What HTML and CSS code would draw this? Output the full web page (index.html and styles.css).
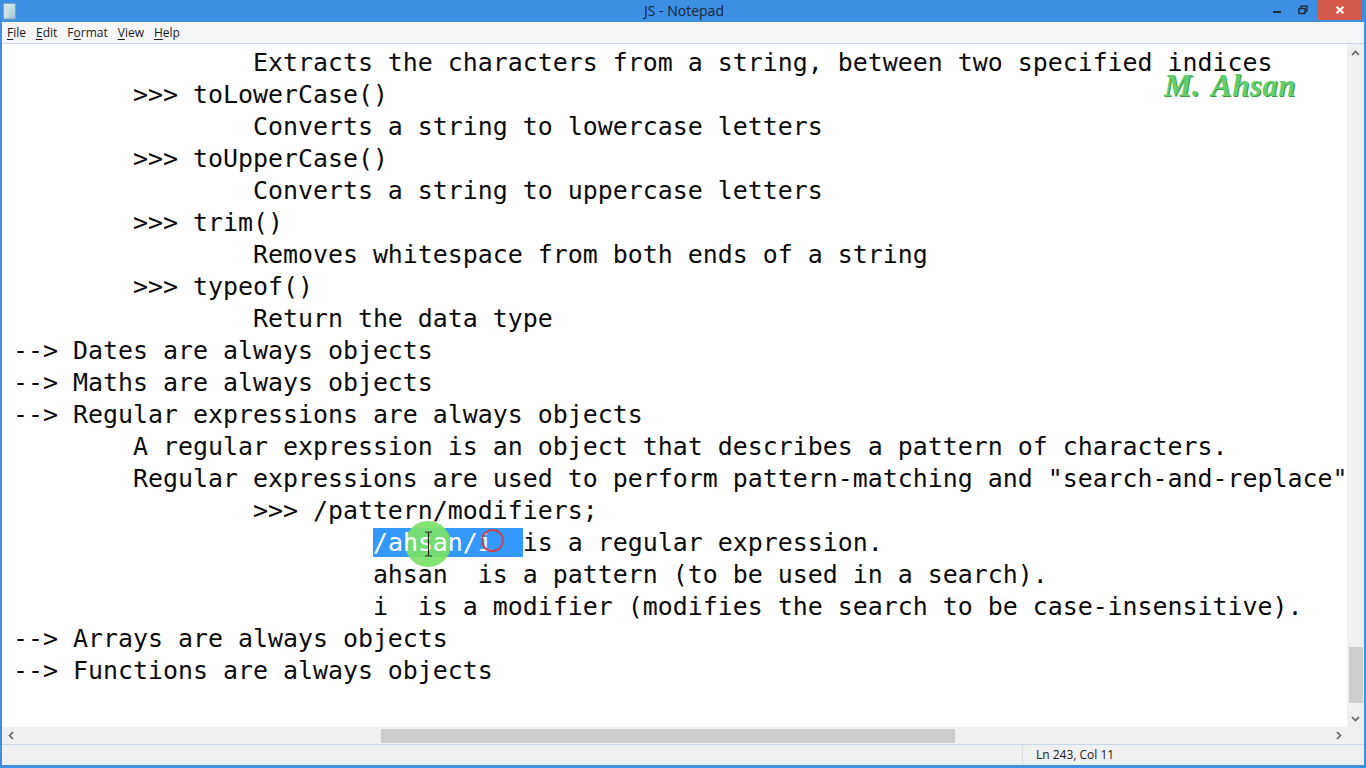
FILE: index.html
```html
<!DOCTYPE html>
<html lang="en">
<head>
<meta charset="utf-8">
<title>JS - Notepad</title>
<link rel="stylesheet" href="styles.css">
</head>
<body>
<div class="window">
  <header class="titlebar">
    <div class="tb-left">
      <svg class="app-icon" width="14" height="17" viewBox="0 0 14 17">
        <defs>
          <linearGradient id="pg" x1="0" y1="0" x2="1" y2="1">
            <stop offset="0" stop-color="#e6f1f6"/>
            <stop offset="1" stop-color="#9ec3d3"/>
          </linearGradient>
        </defs>
        <rect x="0.5" y="0.5" width="12" height="15.5" fill="url(#pg)" stroke="#7ea4b8"/>
        <rect x="1.5" y="1.5" width="3" height="13" fill="#c9dfe9"/>
      </svg>
    </div>
    <div class="tb-title">JS - Notepad</div>
    <div class="tb-right">
      <div class="tb-btn">
        <svg width="10" height="10" viewBox="0 0 10 10"><rect x="1" y="6" width="8" height="2" fill="#1d2b3a"/></svg>
      </div>
      <div class="tb-btn">
        <svg width="10" height="10" viewBox="0 0 10 10"><rect x="3" y="1" width="6" height="5" fill="none" stroke="#1d2b3a" stroke-width="1.4"/><rect x="1" y="3.5" width="6" height="5" fill="#3c8fe3" stroke="#1d2b3a" stroke-width="1.4"/></svg>
      </div>
      <div class="tb-btn tb-close">
        <svg width="10" height="8" viewBox="0 0 10 8"><path d="M1.5 0.8 L8.5 7.2 M8.5 0.8 L1.5 7.2" stroke="#ffffff" stroke-width="2"/></svg>
      </div>
    </div>
  </header>
  <div class="client">
    <nav class="menubar">
      <span class="menu-item"><u>F</u>ile</span>
      <span class="menu-item"><u>E</u>dit</span>
      <span class="menu-item">F<u>o</u>rmat</span>
      <span class="menu-item"><u>V</u>iew</span>
      <span class="menu-item"><u>H</u>elp</span>
    </nav>
    <div class="editor">
      <div class="text">
        <div class="line">                Extracts the characters from a string, between two specified indices</div>
        <div class="line">        &gt;&gt;&gt; toLowerCase()</div>
        <div class="line">                Converts a string to lowercase letters</div>
        <div class="line">        &gt;&gt;&gt; toUpperCase()</div>
        <div class="line">                Converts a string to uppercase letters</div>
        <div class="line">        &gt;&gt;&gt; trim()</div>
        <div class="line">                Removes whitespace from both ends of a string</div>
        <div class="line">        &gt;&gt;&gt; typeof()</div>
        <div class="line">                Return the data type</div>
        <div class="line">--&gt; Dates are always objects</div>
        <div class="line">--&gt; Maths are always objects</div>
        <div class="line">--&gt; Regular expressions are always objects</div>
        <div class="line">        A regular expression is an object that describes a pattern of characters.</div>
        <div class="line">        Regular expressions are used to perform pattern-matching and "search-and-replace" functions on text.</div>
        <div class="line">                &gt;&gt;&gt; /pattern/modifiers;</div>
        <div class="line">                        <span class="sel"><span class="click-dot"></span><span class="sel-text">/ahsan/i  </span><span class="click-ring"></span><svg class="ibeam" width="9" height="26" viewBox="0 0 9 26"><path d="M1 1 H3.5 Q4.5 1 4.5 2.5 V23.5 Q4.5 25 3.5 25 H1 M8 1 H5.5 Q4.5 1 4.5 2.5 M4.5 23.5 Q4.5 25 5.5 25 H8" fill="none" stroke="#222" stroke-width="1.2"/></svg></span>is a regular expression.</div>
        <div class="line">                        ahsan  is a pattern (to be used in a search).</div>
        <div class="line">                        i  is a modifier (modifies the search to be case-insensitive).</div>
        <div class="line">--&gt; Arrays are always objects</div>
        <div class="line">--&gt; Functions are always objects</div>
        <div class="watermark">M. Ahsan</div>
      </div>
      <div class="vscroll">
        <div class="sb-arrow">
          <svg width="9" height="6" viewBox="0 0 9 6"><polyline points="1,5 4.5,1.5 8,5" fill="none" stroke="#606060" stroke-width="1.6"/></svg>
        </div>
        <div class="v-track"><div class="v-thumb"></div></div>
        <div class="sb-arrow">
          <svg width="9" height="6" viewBox="0 0 9 6"><polyline points="1,1 4.5,4.5 8,1" fill="none" stroke="#606060" stroke-width="1.6"/></svg>
        </div>
      </div>
      <div class="hscroll">
        <div class="sb-arrow">
          <svg width="6" height="9" viewBox="0 0 6 9"><polyline points="5,1 1.5,4.5 5,8" fill="none" stroke="#606060" stroke-width="1.6"/></svg>
        </div>
        <div class="h-track"><div class="h-thumb"></div></div>
        <div class="sb-arrow">
          <svg width="6" height="9" viewBox="0 0 6 9"><polyline points="1,1 4.5,4.5 1,8" fill="none" stroke="#606060" stroke-width="1.6"/></svg>
        </div>
      </div>
      <div class="corner"></div>
    </div>
    <footer class="status">
      <div class="status-fill"></div>
      <div class="status-pos">Ln 243, Col 11</div>
    </footer>
  </div>
</div>
</body>
</html>
```

FILE: styles.css
```css
html, body {
  margin: 0;
  padding: 0;
}

body {
  width: 1366px;
  height: 768px;
  overflow: hidden;
  background: #3c8fe3;
  font-family: "Open Sans", "Noto Sans", "DejaVu Sans", sans-serif;
}

.window {
  display: flex;
  flex-direction: column;
  height: 768px;
  background: #3c8fe3;
}

/* ---------- title bar ---------- */
.titlebar {
  height: 22px;
  display: grid;
  grid-template-columns: 1fr auto 1fr;
  align-items: center;
  flex: none;
}

.tb-left {
  display: flex;
  align-items: center;
  padding-left: 3px;
}

.app-icon {
  display: block;
  margin-top: 1px;
}

.tb-title {
  font-size: 14px;
  color: #1a2535;
  line-height: 22px;
  padding-left: 2px;
}

.tb-right {
  display: flex;
  justify-self: end;
  align-self: start;
  padding-right: 4px;
}

.tb-btn {
  width: 26px;
  height: 20px;
  display: flex;
  align-items: center;
  justify-content: center;
}

.tb-close {
  width: 44px;
  background: #d45a4b;
  margin-left: 2px;
}

/* ---------- client ---------- */
.client {
  flex: 1;
  min-height: 0;
  display: flex;
  flex-direction: column;
  margin: 0 2px 3px 2px;
  background: #ffffff;
}

.menubar {
  flex: none;
  height: 21px;
  background: #f5f6f7;
  border-bottom: 1px solid #c6d8eb;
  display: flex;
  align-items: center;
  font-size: 12px;
  color: #1b1b1b;
}

.menu-item {
  padding: 0 5px;
  line-height: 21px;
}

.menu-item u {
  text-decoration: underline;
  text-underline-offset: 2px;
}

/* ---------- editor ---------- */
.editor {
  flex: 1;
  min-height: 0;
  display: grid;
  grid-template-columns: 1fr 17px;
  grid-template-rows: 1fr 17px;
}

.text {
  position: relative;
  overflow: hidden;
  background: #ffffff;
  padding: 3px 0 0 11px;
  font-family: "DejaVu Sans Mono", "Liberation Mono", monospace;
  font-size: 24.915px;
  line-height: 32px;
  color: #0a0a0a;
}

.line {
  height: 32px;
  white-space: pre;
}

.sel {
  position: relative;
  background: #3399ff;
}

.sel-text {
  position: relative;
  z-index: 2;
  color: #ffffff;
}

.click-dot {
  position: absolute;
  z-index: 1;
  left: 32px;
  top: -7px;
  width: 46px;
  height: 46px;
  border-radius: 50%;
  background: rgba(122, 226, 102, 0.92);
}

.click-ring {
  position: absolute;
  z-index: 3;
  left: 108px;
  top: 1px;
  width: 19px;
  height: 19px;
  border-radius: 50%;
  border: 2px solid #c24658;
}

.ibeam {
  position: absolute;
  z-index: 4;
  left: 51px;
  top: 3px;
}

.watermark {
  position: absolute;
  left: 1162px;
  top: 25px;
  font-family: "Liberation Serif", "DejaVu Serif", serif;
  font-style: italic;
  font-weight: bold;
  font-size: 31px;
  line-height: 34px;
  letter-spacing: 0.4px;
  word-spacing: 4px;
  white-space: pre;
  color: #62cf6c;
  text-shadow: 1px 1px 0 #3a9a48;
}

/* ---------- scrollbars ---------- */
.vscroll {
  background: #f0f0f0;
  display: flex;
  flex-direction: column;
}

.hscroll {
  background: #f0f0f0;
  display: flex;
}

.sb-arrow {
  flex: none;
  width: 17px;
  height: 17px;
  display: flex;
  align-items: center;
  justify-content: center;
}

.v-track {
  flex: 1;
  display: flex;
  flex-direction: column;
  align-items: center;
}

.v-thumb {
  width: 14px;
  height: 56px;
  margin-top: 586px;
  background: #cdcdcd;
}

.h-track {
  flex: 1;
  display: flex;
  align-items: center;
}

.h-thumb {
  height: 14px;
  width: 574px;
  margin-left: 362px;
  background: #cdcdcd;
}

.corner {
  background: #f0f0f0;
}

/* ---------- status bar ---------- */
.status {
  flex: none;
  height: 20px;
  border-top: 1px solid #c6d8eb;
  background: #f0f0f0;
  display: flex;
  font-size: 12px;
  color: #1b1b1b;
}

.status-fill {
  width: 1020px;
  border-right: 1px solid #dcdcdc;
}

.status-pos {
  padding-left: 13px;
  line-height: 20px;
}
```
